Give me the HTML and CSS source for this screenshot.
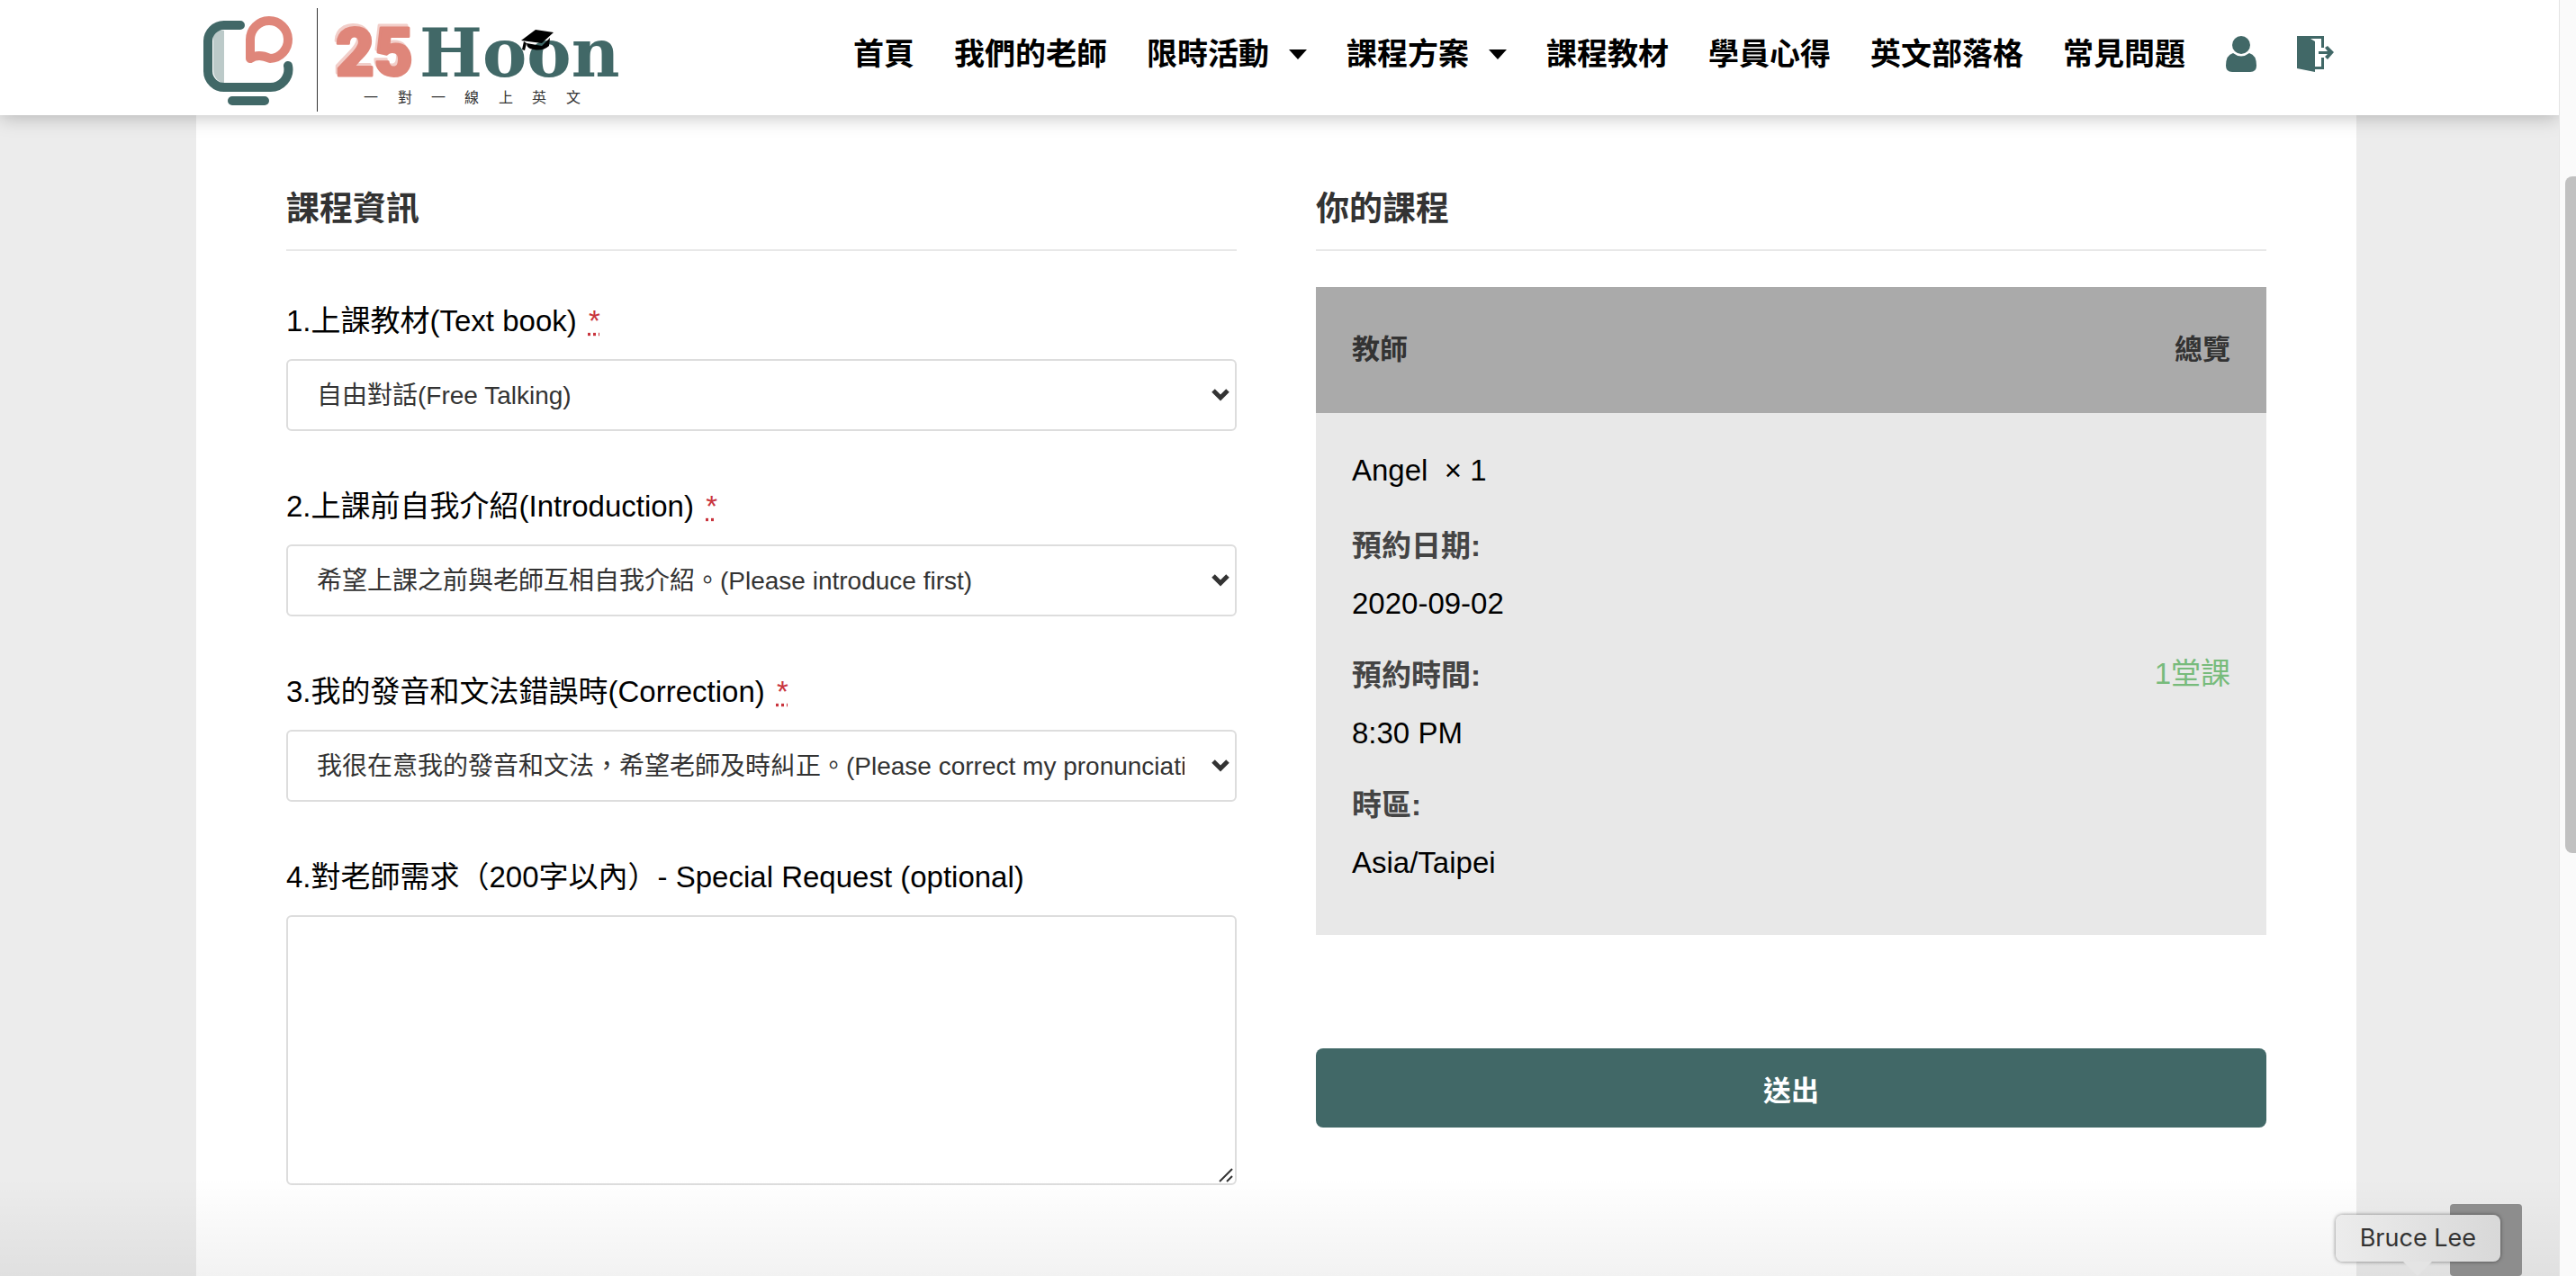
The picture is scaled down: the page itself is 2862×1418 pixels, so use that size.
FILE: index.html
```html
<!DOCTYPE html>
<html lang="zh-Hant">
<head>
    <meta charset="UTF-8">
    <meta name="viewport" content="width=device-width, initial-scale=1.0">
    <title>25Hoon 一對一線上英文</title>
    <link rel="stylesheet" href="styles.css">
</head>
<body>
    <div class="page">
        <header class="site-header">
            <div class="header-inner">
                <a class="logo" href="#" aria-label="25Hoon">
                    <svg width="480" height="120" viewBox="5 0 480 120">
                        <!-- monitor -->
                        <path d="M24 29H36V88Q24 84 24 72Z" fill="#bccac9"/>
                        <path d="M54 23H37A18 18 0 0 0 18 42V74A18 18 0 0 0 37 92H86A20 20 0 0 0 107 68" fill="none" stroke="#416867" stroke-width="10" stroke-linecap="round"/>
                        <rect x="40" y="102" width="46" height="10" rx="5" fill="#416867"/>
                        <!-- speech bubble -->
                        <path d="M65 60V39A21 21 0 1 1 87 60Q74 54 65 60Z" fill="none" stroke="#df867a" stroke-width="10" stroke-linejoin="round"/>
                        <rect x="139" y="4" width="1" height="115" fill="#333"/>
                        <text class="logo-num shade" x="158" y="76">25</text>
                        <text class="logo-num" x="160" y="79">25</text>
                        <text class="logo-name" x="253" y="80">Hoon</text>
                        <!-- graduation cap -->
                        <path d="M366 40L382 28L402 31L389 43Z"/>
                        <path d="M372 43L389 46L398 37L397 46Q390 52 380 50Q372 49 372 43Z"/>
                        <path d="M369 41L367 50L370 51L372 43Z"/>
                        <text class="logo-sub" x="191 229 266 303 341 378 416" y="109">一對一線上英文</text>
                    </svg>
                </a>
                <nav class="main-nav">
                    <a href="#">首頁</a>
                    <a href="#">我們的老師</a>
                    <a class="has-menu" href="#">限時活動</a>
                    <a class="has-menu" href="#">課程方案</a>
                    <a href="#">課程教材</a>
                    <a href="#">學員心得</a>
                    <a href="#">英文部落格</a>
                    <a href="#">常見問題</a>
                    <a href="#" aria-label="會員">
                        <svg width="36" height="40" viewBox="0 0 36 40" fill="#416867">
                            <circle cx="18" cy="10" r="10"/>
                            <path d="M9 19Q18 26 27 19Q35 21 35 33Q35 40 28 40H8Q1 40 1 33Q1 21 9 19Z"/>
                        </svg>
                    </a>
                    <a href="#" aria-label="登出">
                        <svg width="42" height="40" viewBox="0 0 42 40" fill="#416867">
                            <path d="M0 0H30V13H27V3H15L20 6V34H27V24H30V37H20V40L0 36Z"/>
                            <path d="M24 17H34L31 13L34 11L41 18L34 26L31 23L34 20H24Z"/>
                        </svg>
                    </a>
                </nav>
            </div>
        </header>

        <main class="content">
            <form class="checkout">
                <section class="column">
                    <h3>課程資訊</h3>
                    <div class="fields">
                        <div class="field">
                            <label for="textbook">1.上課教材(Text book) <abbr class="required" title="必要欄位">*</abbr></label>
                            <div class="input-box">
                                <select id="textbook">
                                    <option>自由對話(Free Talking)</option>
                                </select>
                                <svg class="arrow" width="20" height="14" viewBox="0 0 20 14"><path d="M2 2L10 10L18 2"/></svg>
                            </div>
                        </div>
                        <div class="field">
                            <label for="introduction">2.上課前自我介紹(Introduction) <abbr class="required" title="必要欄位">*</abbr></label>
                            <div class="input-box">
                                <select id="introduction">
                                    <option>希望上課之前與老師互相自我介紹。(Please introduce first)</option>
                                </select>
                                <svg class="arrow" width="20" height="14" viewBox="0 0 20 14"><path d="M2 2L10 10L18 2"/></svg>
                            </div>
                        </div>
                        <div class="field">
                            <label for="correction">3.我的發音和文法錯誤時(Correction) <abbr class="required" title="必要欄位">*</abbr></label>
                            <div class="input-box">
                                <select id="correction">
                                    <option>我很在意我的發音和文法，希望老師及時糾正。(Please correct my pronunciation)</option>
                                </select>
                                <svg class="arrow" width="20" height="14" viewBox="0 0 20 14"><path d="M2 2L10 10L18 2"/></svg>
                            </div>
                        </div>
                        <div class="field">
                            <label for="request">4.對老師需求（200字以內）- Special Request (optional)</label>
                            <div class="input-box">
                                <textarea id="request"></textarea>
                                <svg class="grip" width="16" height="16" viewBox="0 0 16 16"><path d="M1 15L15 1M9 15L15 9"/></svg>
                            </div>
                        </div>
                    </div>
                </section>

                <section class="column">
                    <h3>你的課程</h3>
                    <table class="order">
                        <thead>
                            <tr>
                                <th>教師</th>
                                <th class="total">總覽</th>
                            </tr>
                        </thead>
                        <tbody>
                            <tr>
                                <td>
                                    <p class="teacher">Angel&nbsp; × 1</p>
                                    <dl>
                                        <dt>預約日期:</dt>
                                        <dd>2020-09-02</dd>
                                        <dt>預約時間:</dt>
                                        <dd>8:30 PM</dd>
                                        <dt>時區:</dt>
                                        <dd>Asia/Taipei</dd>
                                    </dl>
                                </td>
                                <td class="total">1堂課</td>
                            </tr>
                        </tbody>
                    </table>
                    <button class="submit" type="submit">送出</button>
                </section>
            </form>
        </main>

        <div class="bottom-shade"></div>
        <div class="back-top"></div>
        <div class="tooltip">Bruce Lee</div>
    </div>
    <div class="scrollbar"><div class="thumb"></div></div>
</body>
</html>
```
FILE: styles.css
```css
* {
    box-sizing: border-box;
}

body {
    margin: 0;
    height: 100vh;
    display: flex;
    overflow: hidden;
    font-family: "Liberation Sans", "Noto Sans CJK TC", sans-serif;
    font-size: 33px;
    line-height: 48px;
    color: #000;
}

.page {
    position: relative;
    flex: 1;
    display: flex;
    flex-direction: column;
    padding-right: 7px;
    background: #ececec;
    overflow: hidden;
}

/* Header */
.site-header {
    position: relative;
    z-index: 1;
    flex: none;
    height: 128px;
    margin-right: -7px;
    padding-right: 7px;
    background: #fff;
    box-shadow: 0 2px 20px rgba(0, 0, 0, 0.25);
}

.header-inner {
    max-width: 2400px;
    margin: 0 auto;
    display: flex;
    justify-content: space-between;
}

.logo {
    display: block;
    height: 128px;
    padding-top: 5px;
}

.logo-num {
    font-family: Roboto, "Liberation Sans", sans-serif;
    font-size: 74px;
    font-weight: 900;
    fill: #df867a;
    stroke: #df867a;
    stroke-width: 3;
    stroke-linejoin: round;
}

.shade {
    opacity: 0.4;
}

.logo-name {
    font-family: "DejaVu Serif", serif;
    font-size: 74px;
    font-weight: bold;
    fill: #416867;
}

.logo-sub {
    font-size: 16px;
    fill: #333;
}

.main-nav {
    display: flex;
    align-items: center;
    gap: 44px;
    height: 120px;
    padding-right: 24px;
    font-size: 34px;
}

.main-nav a {
    display: flex;
    align-items: center;
    color: #000;
    font-weight: bold;
    text-decoration: none;
}

.has-menu::after {
    content: "";
    margin-left: 22px;
    border: 10px solid transparent;
    border-top: 11px solid #000;
    border-bottom: 0;
}

/* Checkout */
.content {
    flex: 1;
    width: 100%;
    max-width: 2400px;
    margin: 0 auto;
    padding: 81px 100px 0;
    background: #fff;
}

.checkout {
    display: flex;
    gap: 88px;
}

.column {
    flex: 1;
    min-width: 0;
}

h3 {
    margin: 0 0 40px;
    padding-bottom: 20px;
    border-bottom: 2px solid #e8e8e8;
    font-size: 37px;
    line-height: 48px;
    color: #333;
}

.fields {
    padding-top: 14px;
}

.field {
    margin-bottom: 60px;
}

label {
    display: block;
    margin-bottom: 18px;
}

.required {
    margin-left: 4px;
    color: #c9353e;
    text-decoration: underline dotted;
}

.input-box {
    position: relative;
}

.arrow,
.grip {
    position: absolute;
    fill: none;
    stroke: #333;
    pointer-events: none;
}

.arrow {
    right: 8px;
    top: 33px;
    stroke-width: 5;
}

.grip {
    right: 4px;
    bottom: 3px;
    stroke-width: 2;
}

select,
textarea {
    display: block;
    width: 100%;
    border: 2px solid #ddd;
    border-radius: 6px;
    background: #fff;
    color: #333;
    font-family: inherit;
    font-size: 28px;
}

select {
    appearance: none;
    height: 80px;
    padding: 0 56px 0 32px;
}

textarea {
    height: 300px;
    padding: 20px 32px;
}

textarea::-webkit-resizer {
    background: none;
}

.order {
    width: 100%;
    border-collapse: collapse;
    background: #e8e8e8;
}

.order th {
    height: 140px;
    padding: 0 40px;
    background: #aaa;
    color: #333;
    font-size: 31px;
    text-align: left;
}

.order td {
    padding: 40px;
}

.order .total {
    text-align: right;
}

.order td.total {
    color: #77bb7b;
}

.teacher,
dl,
dd {
    margin: 0;
}

.teacher {
    margin-bottom: 36px;
}

dt {
    margin-bottom: 16px;
    color: #444;
    font-weight: bold;
}

dd {
    margin-bottom: 32px;
}

dd:last-child {
    margin-bottom: 16px;
}

.submit {
    display: block;
    width: 100%;
    height: 88px;
    margin-top: 126px;
    border: 0;
    border-radius: 8px;
    background: #416867;
    color: #fff;
    font-family: inherit;
    font-size: 31px;
    font-weight: bold;
}

/* Floating parts */
.bottom-shade {
    position: absolute;
    left: 0;
    right: 0;
    bottom: 0;
    height: 110px;
    background: linear-gradient(to bottom, rgba(0, 0, 0, 0), rgba(0, 0, 0, 0.05));
}

.back-top {
    position: absolute;
    right: 41px;
    bottom: 0;
    width: 80px;
    height: 80px;
    border-radius: 4px;
    background: #8d8d8d;
}

.tooltip {
    position: absolute;
    right: 65px;
    bottom: 16px;
    height: 52px;
    padding: 0 27px;
    border-radius: 8px;
    background: linear-gradient(to right, #ececec, #d8d8d8);
    box-shadow: 0 0 4px rgba(0, 0, 0, 0.5);
    color: #333;
    font-family: Inter, sans-serif;
    font-size: 27px;
    line-height: 52px;
}

.tooltip::after {
    content: "";
    position: absolute;
    left: 50%;
    top: 52px;
    border: 16px solid transparent;
    border-top-color: #e4e4e4;
    transform: translateX(-50%);
}

.scrollbar {
    width: 19px;
    padding: 196px 0 0 6px;
    border-left: 1px solid #e4e4e4;
    background: #fafafa;
}

.thumb {
    height: 752px;
    border-radius: 8px 0 0 8px;
    background: #c1c1c1;
}
```
